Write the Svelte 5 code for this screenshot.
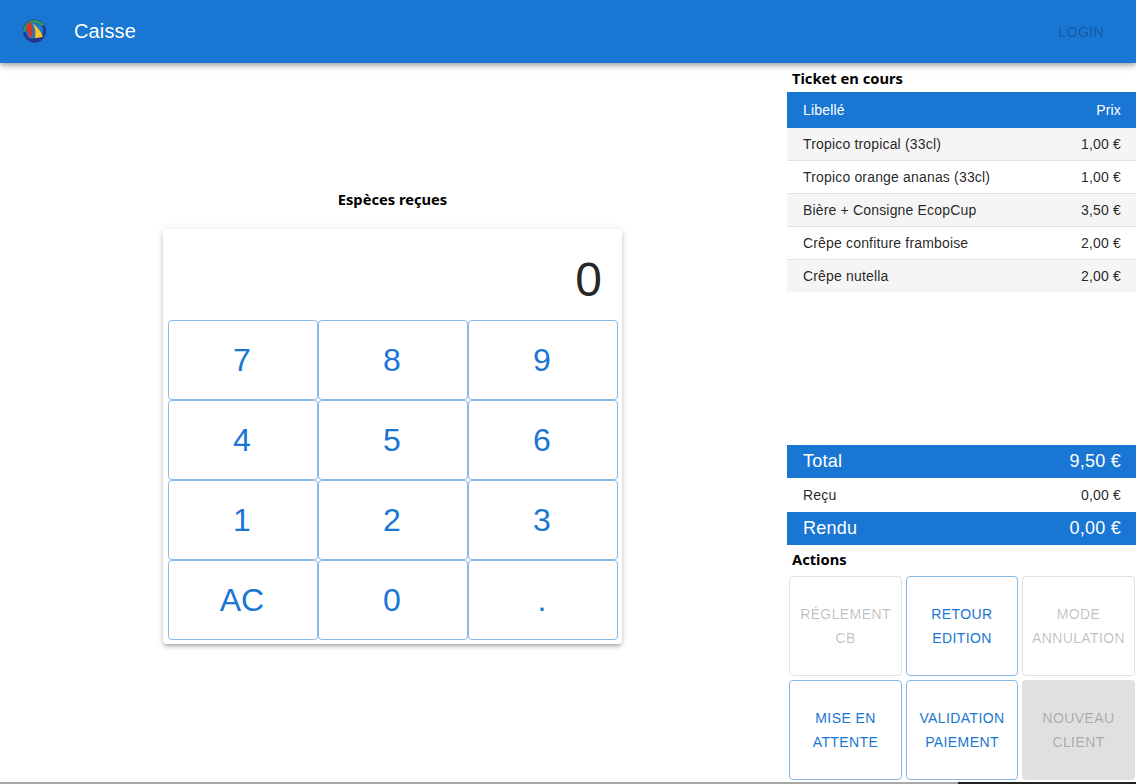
<script>
  const keys = ['7', '8', '9', '4', '5', '6', '1', '2', '3', 'AC', '0', '.'];

  const lines = [
    { label: 'Tropico tropical (33cl)', price: '1,00 €' },
    { label: 'Tropico orange ananas (33cl)', price: '1,00 €' },
    { label: 'Bière + Consigne EcopCup', price: '3,50 €' },
    { label: 'Crêpe confiture framboise', price: '2,00 €' },
    { label: 'Crêpe nutella', price: '2,00 €' }
  ];

  const actions = [
    { top: 'RÉGLEMENT', bottom: 'CB', state: 'off' },
    { top: 'RETOUR', bottom: 'EDITION', state: '' },
    { top: 'MODE', bottom: 'ANNULATION', state: 'off' },
    { top: 'MISE EN', bottom: 'ATTENTE', state: '' },
    { top: 'VALIDATION', bottom: 'PAIEMENT', state: '' },
    { top: 'NOUVEAU', bottom: 'CLIENT', state: 'filled' }
  ];
</script>

<div class="page">
  <header class="bar">
    <svg class="logo" viewBox="0 0 23 24" width="23" height="24" aria-hidden="true">
      <circle cx="11.5" cy="12" r="11.5" fill="#27348b" />
      <path d="M.2 13.5A11.5 11.5 0 0 1 21.5 6.5L11.5 7 3 12Z" fill="#2e9e4f" />
      <circle cx="11.5" cy="12" r="8.8" fill="#1976d2" />
      <path d="M7 2.5C10 7 10.5 12 9.5 17.5L6 18.5C6.5 15 4 12 3 9 4 6 5 4 7 2.5Z" fill="#d9342b" />
      <path d="M9.5 4.2C15 8 18.5 13 19.8 18L12 19.2C13 14 12.5 8.5 9.5 4.2Z" fill="#f6c51e" />
      <path d="M4.5 20C9 19.2 15 18.8 20 18.4 16 23 8.5 23.5 4.5 20Z" fill="#27348b" />
    </svg>
    <span class="title">Caisse</span>
    <button class="login">LOGIN</button>
  </header>

  <main class="content">
    <section class="pad-area">
      <h2 class="pad-title">Espèces reçues</h2>
      <div class="calc">
        <div class="display">0</div>
        <div class="keys">
          {#each keys as key}
            <button class="key">{key}</button>
          {/each}
        </div>
      </div>
    </section>

    <aside class="side">
      <h3 class="heading">Ticket en cours</h3>
      <div class="row head"><span>Libellé</span><span>Prix</span></div>
      <div class="lines">
        {#each lines as line}
          <div class="row line"><span>{line.label}</span><span>{line.price}</span></div>
        {/each}
      </div>

      <div class="row sum"><span>Total</span><span>9,50 €</span></div>
      <div class="row received"><span>Reçu</span><span>0,00 €</span></div>
      <div class="row sum"><span>Rendu</span><span>0,00 €</span></div>

      <h3 class="heading actions-heading">Actions</h3>
      <div class="actions">
        {#each actions as action}
          <button class="action {action.state}">{action.top}<br />{action.bottom}</button>
        {/each}
      </div>
    </aside>
  </main>

  <div class="edge"><span class="edge-dark"></span></div>
</div>

<style>
  :global(body) {
    margin: 0;
    background: #fff;
  }

  .page {
    position: relative;
    height: 784px;
    overflow: hidden;
    font-family: "Liberation Sans", Arial, sans-serif;
    color: rgba(0, 0, 0, 0.87);
  }

  button {
    font-family: inherit;
    background: none;
    padding: 0;
    cursor: pointer;
  }

  .bar {
    position: relative;
    z-index: 1;
    height: 63px;
    display: flex;
    align-items: center;
    padding: 0 32px 0 23px;
    background: #1976d2;
    color: #fff;
    box-shadow: 0 2px 4px -1px rgba(0, 0, 0, 0.2), 0 4px 5px 0 rgba(0, 0, 0, 0.14), 0 1px 10px 0 rgba(0, 0, 0, 0.12);
  }

  .logo {
    display: block;
    margin-top: -1px;
  }

  .title {
    margin-left: 28px;
    font-size: 20px;
    line-height: 32px;
    letter-spacing: 0.15px;
    margin-top: -1px;
  }

  .login {
    margin-left: auto;
    border: 0;
    font-size: 14px;
    font-weight: 400;
    letter-spacing: 0.4px;
    color: rgba(0, 0, 0, 0.26);
  }

  .content {
    display: flex;
    justify-content: space-between;
    height: 721px;
  }

  .pad-area {
    width: 785px;
    display: flex;
    flex-direction: column;
    align-items: center;
    padding-top: 125px;
    box-sizing: border-box;
  }

  .pad-title,
  .heading {
    margin: 0;
    font-family: "Noto Sans", sans-serif;
    font-size: 14.7px;
    font-weight: 700;
    line-height: 22px;
    color: #000;
  }

  .pad-title {
    margin-bottom: 19px;
  }

  .calc {
    width: 459px;
    height: 415px;
    padding: 0 5px 4px;
    box-sizing: border-box;
    border-radius: 4px;
    background: #fff;
    box-shadow: 0 3px 3px -2px rgba(0, 0, 0, 0.2), 0 3px 4px 0 rgba(0, 0, 0, 0.14), 0 1px 8px 0 rgba(0, 0, 0, 0.12);
  }

  .display {
    height: 91px;
    padding-right: 15px;
    font-size: 48px;
    line-height: 102px;
    text-align: right;
  }

  .keys {
    display: grid;
    grid-template-columns: repeat(3, 150px);
    grid-auto-rows: 80px;
  }

  .key {
    border: 1px solid rgba(25, 118, 210, 0.5);
    border-radius: 4px;
    padding-right: 2px;
    font-size: 32px;
    color: #1976d2;
  }

  .side {
    width: 349px;
    padding-top: 4px;
  }

  .heading {
    padding: 0 0 2px 5px;
    line-height: 23px;
  }

  .row {
    display: flex;
    justify-content: space-between;
    align-items: center;
    padding: 0 15px 0 16px;
    font-size: 14px;
    letter-spacing: 0.17px;
  }

  .head {
    height: 36px;
    background: #1976d2;
    color: #fff;
  }

  .lines {
    height: 317px;
  }

  .line {
    height: 33px;
    box-sizing: border-box;
    color: rgba(0, 0, 0, 0.87);
    border-bottom: 1px solid #e0e0e0;
  }

  .line:nth-child(odd) {
    background: #f5f5f5;
  }

  .line:last-child {
    border-bottom: 0;
    height: 32px;
  }

  .sum {
    height: 33px;
    background: #1976d2;
    color: #fff;
    font-size: 18px;
    letter-spacing: 0.25px;
  }

  .received {
    height: 34px;
  }

  .actions-heading {
    margin-top: 3px;
  }

  .actions {
    display: grid;
    grid-template-columns: 113px 112px 113px;
    grid-auto-rows: 100px;
    gap: 4px;
    padding: 3px 0 0 2px;
  }

  .action {
    border: 1px solid rgba(25, 118, 210, 0.5);
    border-radius: 4px;
    font-size: 14px;
    line-height: 24px;
    letter-spacing: 0.4px;
    font-weight: 400;
    color: #1976d2;
  }

  .action.off {
    border-color: rgba(0, 0, 0, 0.12);
    color: rgba(0, 0, 0, 0.26);
  }

  .action.filled {
    border-color: transparent;
    background: #e0e0e0;
    color: rgba(0, 0, 0, 0.26);
  }

  /* strip of the window below the page */
  .edge {
    position: absolute;
    left: 0;
    right: 0;
    bottom: 0;
    height: 2px;
    background: #a8a8a8;
  }

  .edge-dark {
    position: absolute;
    top: 0;
    right: 0;
    bottom: 0;
    width: 178px;
    background: #222;
  }
</style>
